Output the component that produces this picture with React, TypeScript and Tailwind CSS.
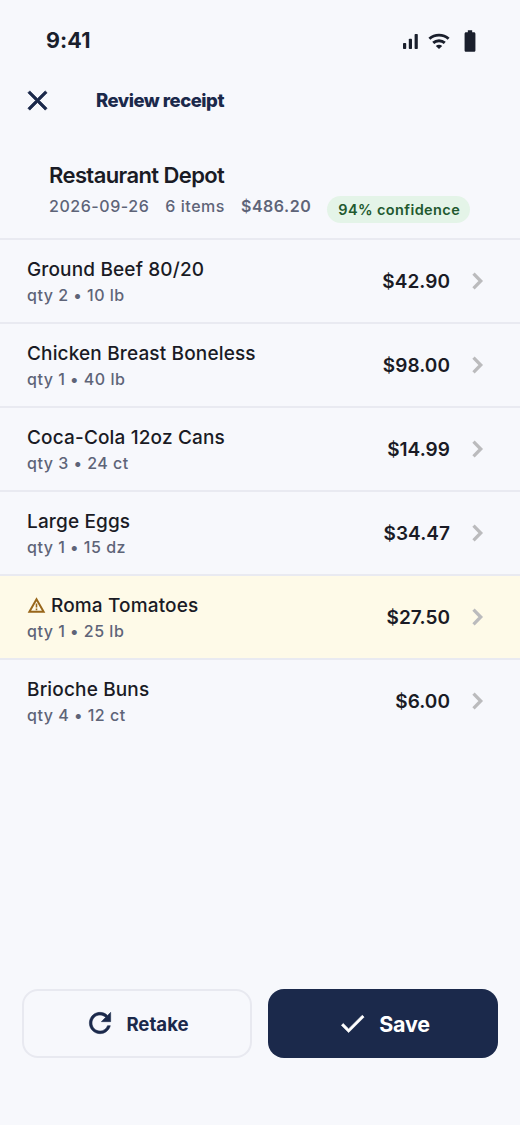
const items = [
  { name: 'Ground Beef 80/20', sub: 'qty 2 • 10 lb', price: '$42.90' },
  { name: 'Chicken Breast Boneless', sub: 'qty 1 • 40 lb', price: '$98.00' },
  { name: 'Coca-Cola 12oz Cans', sub: 'qty 3 • 24 ct', price: '$14.99' },
  { name: 'Large Eggs', sub: 'qty 1 • 15 dz', price: '$34.47' },
  { name: 'Roma Tomatoes', sub: 'qty 1 • 25 lb', price: '$27.50', warn: true },
  { name: 'Brioche Buns', sub: 'qty 4 • 12 ct', price: '$6.00' },
];

export default function App() {
  return (
    <div className="flex h-[1125px] w-[520px] flex-col overflow-hidden bg-[#f7f8fc] font-['Inter',sans-serif] text-[#1a1b25] antialiased">
      <div className="flex h-[80px] shrink-0 items-center justify-between pt-px pr-[37px] pl-[46px] text-[#1a1f2c]">
        <span className="-mt-px text-[21.5px] leading-7 font-bold tracking-[0.1px]">9:41</span>
        <div className="flex items-center">
          <svg width="18" height="18" viewBox="0 0 18 18" fill="currentColor">
            <rect x="1" y="11" width="3.2" height="6" rx="0.8" />
            <rect x="6.800" y="6.800" width="3.2" height="10.200" rx="0.8" />
            <rect x="12.600" y="2" width="3.2" height="15" rx="0.8" />
          </svg>
          <svg className="ml-[7px]" width="24" height="24" viewBox="0 0 24 24" fill="none" stroke="currentColor" strokeWidth="2.9">
            <path d="M2.400 9.800c5.400-4.900 13.800-4.900 19.200 0M6.200 13.900c3.300-2.900 8.300-2.900 11.600 0" />
            <path d="M8.800 16.900c1.900-1.600 4.500-1.600 6.400 0L12 20.100z" fill="currentColor" stroke="none" />
          </svg>
          <svg className="ml-[6px]" width="26" height="26" viewBox="0 0 24 24" fill="currentColor">
            <path d="M15.670 4H14V2h-4v2H8.330C7.600 4 7 4.600 7 5.330v15.330C7 21.400 7.600 22 8.330 22h7.330c.740 0 1.340-.600 1.340-1.330V5.330C17 4.600 16.400 4 15.670 4z" />
          </svg>
        </div>
      </div>
      <div className="flex h-[41px] shrink-0 items-center pl-[21px] text-[#1b294b]">
        <svg className="-mt-px" width="33" height="33" viewBox="0 0 24 24" fill="currentColor" stroke="currentColor" strokeWidth="0.5">
          <path d="M19 6.410 17.590 5 12 10.590 6.410 5 5 6.410 10.590 12 5 17.590 6.410 19 12 13.410 17.590 19 19 17.590 13.410 12z" />
        </svg>
        <h1 className="mt-px ml-[42px] text-[18.500px] font-extrabold tracking-[-0.5px]">Review receipt</h1>
      </div>
      <div className="h-[117px] shrink-0 pt-[39px] pl-[49px]">
        <h2 className="text-[22px] leading-[30px] font-semibold tracking-[-0.6px]">Restaurant Depot</h2>
        <div className="flex h-[32px] items-start text-[16px] leading-[33px] font-medium tracking-[0.55px] text-[#5e6478]">
          <span>2026-09-26</span>
          <span className="ml-4">6 items</span>
          <span className="ml-4 font-semibold tracking-[0.5px]">$486.20</span>
          <span className="mt-[6px] ml-4 flex h-[27px] w-[143px] items-center justify-center rounded-full bg-[#e4f4e8] pt-px pl-px text-[14.500px] leading-none font-semibold tracking-[0.4px] text-[#22592f]">94% confidence</span>
        </div>
      </div>
      <div className="shrink-0">
        {items.map((it) => (
          <div key={it.name} className={`flex h-[84px] items-center border-t-2 border-[#e9eaf1] pr-[29px] pl-[27px] ${it.warn ? 'bg-[#fefae8]' : ''}`}>
            <div className="flex-1 pt-[2px]">
              <div className="flex items-center text-[19px] leading-[27px] font-medium tracking-[0.15px]">
                {it.warn && (
                  <svg className="mr-[5px]" width="19" height="19" viewBox="0 0 24 24" fill="none" stroke="#98661a" strokeWidth="2.5">
                    <path d="M12 4.200 21 20H3z" />
                    <path d="M12 9.500v5M12 15.800v2.200" strokeWidth="2" />
                  </svg>
                )}
                {it.name}
              </div>
              <div className="text-[16px] leading-[25px] font-medium tracking-[0.5px] text-[#5e6478]">{it.sub}</div>
            </div>
            <span className="pt-[2px] text-[19px] font-semibold tracking-[0.05px]">{it.price}</span>
            <svg className="ml-[13px]" width="28" height="28" viewBox="0 0 24 24" fill="none" stroke="#bbbbbd" strokeWidth="2.800">
              <path d="M9 5.700 15.200 12 9 18.300" />
            </svg>
          </div>
        ))}
      </div>
      <div className="mt-auto mb-[67px] flex h-[69px] shrink-0 gap-4 px-[22px]">
        <button className="flex w-[230px] shrink-0 items-center justify-center rounded-[16px] border-2 border-[#e8e9f0] pt-[2px] pr-px text-[18.600px] font-bold text-[#1b294b]">
          <svg className="mr-[10px] -mt-[3px]" width="32" height="32" viewBox="0 0 24 24" fill="currentColor" stroke="currentColor" strokeWidth="0.4">
            <path d="M17.650 6.350C16.200 4.900 14.210 4 12 4c-4.420 0-7.990 3.580-7.990 8s3.570 8 7.990 8c3.730 0 6.840-2.550 7.730-6h-2.080c-.820 2.330-3.040 4-5.650 4-3.310 0-6-2.690-6-6s2.690-6 6-6c1.660 0 3.140.690 4.220 1.780L13 11h7V4l-2.350 2.350z" />
          </svg>
          Retake
        </button>
        <button className="flex w-[230px] shrink-0 items-center justify-center rounded-[16px] bg-[#1b294b] pt-px text-[21.500px] font-bold tracking-[-0.2px] text-white">
          <svg className="-mt-px mr-[11px] ml-px" width="31" height="31" viewBox="0 0 24 24" fill="currentColor" stroke="currentColor" strokeWidth="0.500">
            <path d="M9 16.170 4.830 12l-1.420 1.410L9 19 21 7l-1.410-1.410z" />
          </svg>
          Save
        </button>
      </div>
    </div>
  );
}
